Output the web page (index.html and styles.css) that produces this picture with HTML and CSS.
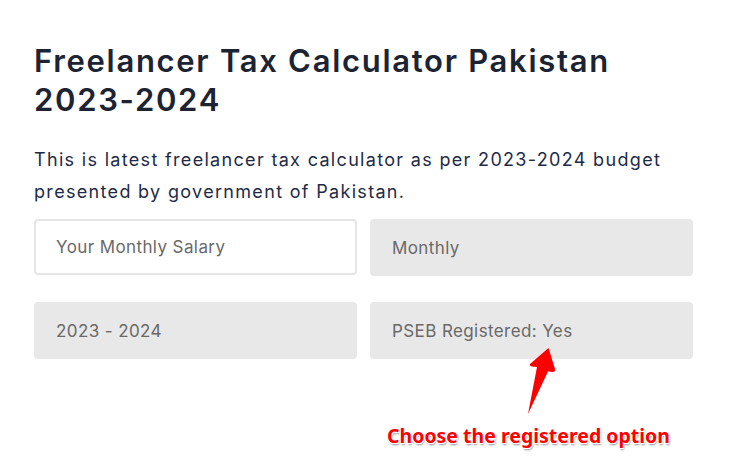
FILE: index.html
```html
<!DOCTYPE html>
<html lang="en">
<head>
<meta charset="utf-8">
<title>Freelancer Tax Calculator Pakistan 2023-2024</title>
<link rel="stylesheet" href="styles.css">
</head>
<body>
<main class="page">
  <h1 class="title">Freelancer Tax Calculator Pakistan <span class="nowrap">2023-2024</span></h1>
  <p class="intro">This is latest freelancer tax calculator as per 2023-2024 budget presented by government of Pakistan.</p>
  <div class="form-grid">
    <div class="field field-input">Your Monthly Salary</div>
    <div class="field field-select">Monthly</div>
    <div class="field field-select">2023 - 2024</div>
    <div class="field field-select">PSEB Registered: Yes</div>
  </div>
</main>
<svg class="arrow" width="40" height="80" viewBox="0 0 40 80" aria-hidden="true">
  <path d="M33.5 1 L15 17 Q14.5 19 16.5 19.5 L22 20 L13 67 L33 24.5 L38 25 Q40.5 24.5 40 22 Z" fill="#ff0000"/>
</svg>
<div class="note">Choose the registered option</div>
</body>
</html>
```
FILE: styles.css
```css
html, body {
  margin: 0;
  padding: 0;
  background: #ffffff;
}
body {
  position: relative;
  width: 743px;
  height: 471px;
  overflow: hidden;
}
.page {
  padding: 41px 40px 0 34px;
  font-family: "Inter", "Noto Sans", sans-serif;
}
.title {
  margin: 0;
  font-size: 31px;
  line-height: 39px;
  font-weight: 600;
  letter-spacing: 1.7px;
  color: #1c2433;
  width: 660px;
}
.nowrap {
  white-space: nowrap;
}
.intro {
  margin: 25px 0 0 0;
  font-size: 18px;
  line-height: 32px;
  letter-spacing: 1.32px;
  color: #1d2b48;
  width: 670px;
}
.form-grid {
  margin-top: 11px;
  display: grid;
  grid-template-columns: 323px 323px;
  column-gap: 13px;
  row-gap: 26px;
  width: 659px;
}
.field {
  box-sizing: border-box;
  height: 56px;
  border-radius: 4px;
  display: flex;
  align-items: center;
  padding-left: 22px;
  font-size: 17px;
  letter-spacing: 0.4px;
  color: #696969;
}
.field-input {
  background: #ffffff;
  border: 2px solid #e6e6e6;
  padding-left: 20px;
}
.field-select {
  background: #e8e8e8;
  height: 57px;
}
.arrow {
  position: absolute;
  left: 515px;
  top: 347px;
}
.note {
  position: absolute;
  left: 387px;
  top: 422px;
  font-family: "Noto Sans", "DejaVu Sans", sans-serif;
  font-weight: 700;
  font-size: 19.5px;
  color: #ff0000;
  text-shadow: -1px -1px 0 #fff, 1px -1px 0 #fff, -1px 1px 0 #fff, 1px 1px 0 #fff, 1px 2px 2px rgba(0,0,0,0.45);
  white-space: nowrap;
}
```
